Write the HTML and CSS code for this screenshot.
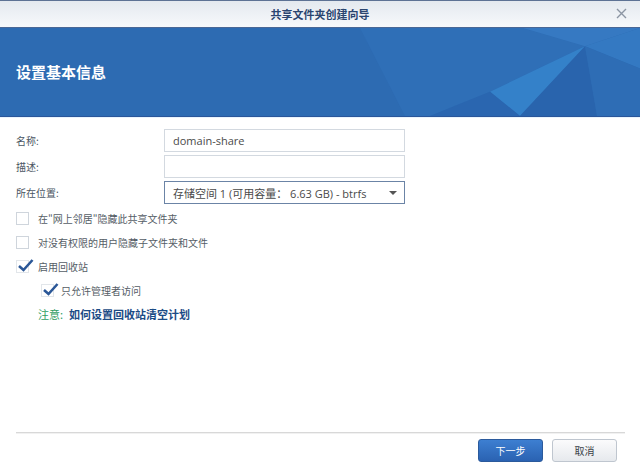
FILE: index.html
```html
<!DOCTYPE html>
<html lang="zh-CN">
<head>
<meta charset="utf-8">
<title>共享文件夹创建向导</title>
<link rel="stylesheet" href="styles.css">
</head>
<body>
<div class="dialog">
  <div class="titlebar">
    <span></span>
    <span class="title">共享文件夹创建向导</span>
    <span class="close"><svg width="11" height="11" viewBox="0 0 11 11"><path d="M1 1L10 10M10 1L1 10" stroke="#8c95a3" stroke-width="1.4" fill="none"/></svg></span>
  </div>
  <div class="banner">
    <svg class="banner-bg" viewBox="0 0 640 87" preserveAspectRatio="none">
      <rect width="640" height="87" fill="#2d6bb2"/>
      <polygon points="360,0 523,0 585,18 490,63 430,87 405,87" fill="#2f6fb7"/>
      <polygon points="523,0 640,0 585,18" fill="#3679c2"/>
      <polygon points="585,18 640,0 640,40" fill="#3479c2"/>
      <polygon points="585,18 490,63 520,87" fill="#3481c9"/>
      <polygon points="585,18 520,87 597,87" fill="#2964ad"/>
      <polygon points="585,18 597,87 640,87 640,40" fill="#2e6db5"/>
      <polygon points="490,63 430,87 520,87" fill="#2a66b0"/>
    </svg>
    <h1 class="banner-title">设置基本信息</h1>
  </div>
  <div class="content">
    <div class="fields">
      <label class="label">名称:</label>
      <div class="input">domain-share</div>
      <label class="label">描述:</label>
      <div class="input"></div>
      <label class="label">所在位置:</label>
      <div class="input select"><span>存储空间 1 (可用容量： 6.63 GB) - btrfs</span><span class="arrow"></span></div>
    </div>
    <div class="options">
      <div class="opt"><span class="cb"></span><span>在"网上邻居"隐藏此共享文件夹</span></div>
      <div class="opt"><span class="cb"></span><span>对没有权限的用户隐藏子文件夹和文件</span></div>
      <div class="opt"><span class="cb checked"><svg width="17" height="15" viewBox="0 0 17 15"><path d="M2 8L6.5 12L15.5 2" stroke="#2b5797" stroke-width="2.6" fill="none"/></svg></span><span>启用回收站</span></div>
      <div class="opt sub"><span class="cb checked"><svg width="17" height="15" viewBox="0 0 17 15"><path d="M2 8L6.5 12L15.5 2" stroke="#2b5797" stroke-width="2.6" fill="none"/></svg></span><span>只允许管理者访问</span></div>
      <div class="opt note"><span class="note-label">注意:</span><span class="note-link">如何设置回收站清空计划</span></div>
    </div>
  </div>
  <div class="footer">
    <button class="btn primary">下一步</button>
    <button class="btn">取消</button>
  </div>
</div>
</body>
</html>
```
FILE: styles.css
```css
* { box-sizing: border-box; }
html, body { margin: 0; padding: 0; background: #fff; }
body { font-family: "Open Sans", "Noto Sans CJK SC", sans-serif; color: #4b5663; }
.dialog { width: 640px; height: 466px; display: flex; flex-direction: column; overflow: hidden; }
.titlebar {
  height: 28px;
  border-top: 1px solid #5d7294;
  border-bottom: 1px solid #4a6896;
  background: linear-gradient(#e4e9ef, #f7f9fb);
  display: grid;
  grid-template-columns: 1fr auto 1fr;
  align-items: center;
}
.title { font-family: "Noto Sans CJK SC", sans-serif; font-size: 11px; font-weight: 700; color: #2a4570; padding-bottom: 1px; }
.close { justify-self: end; padding-right: 13px; display: flex; padding-bottom: 2px; }
.banner {
  height: 89px;
  display: grid;
  border-bottom: 1px solid #2a569a;
  box-shadow: 0 1px 0 #e8f3fc;
}
.banner-bg { grid-area: 1 / 1; width: 640px; height: 88px; display: block; }
.banner-title {
  grid-area: 1 / 1;
  align-self: center;
  margin: 0 0 0 16px;
  font-family: "Noto Sans CJK SC", sans-serif;
  font-size: 15px;
  font-weight: 700;
  color: #fff;
  padding-bottom: 1px;
}
.content { flex: 1; padding: 12px 0 0 16px; }
.fields { display: grid; grid-template-columns: 148px 241px; row-gap: 3px; align-items: center; }
.label { font-family: "Noto Sans CJK SC", sans-serif; font-size: 10px; color: #4b5663; }
.input {
  height: 23px;
  border: 1px solid #d3d9e0;
  background: #fff;
  font-size: 11px;
  color: #4a4a4a;
  padding: 0 8px;
  display: flex;
  align-items: center;
}
.select { border-color: #6b84a6; justify-content: space-between; padding-right: 7px; }
.arrow { width: 0; height: 0; border-left: 4px solid transparent; border-right: 4px solid transparent; border-top: 4px solid #555; }
.options { display: flex; flex-direction: column; padding-top: 2px; }
.opt { height: 24px; display: flex; align-items: center; font-family: "Noto Sans CJK SC", sans-serif; font-size: 10px; color: #555d66; }
.cb { width: 13px; height: 13px; border: 1px solid #cfd5dc; background: #fff; margin-right: 9px; flex: none; display: flex; }
.cb.checked { border-color: #e2e6ea; }
.cb svg { margin: -3px 0 0 0; flex: none; }
.sub { padding-left: 25px; }
.sub .cb { margin-right: 7px; }
.note { padding-left: 22px; font-size: 11px; }
.note-label { color: #2f9d63; margin-right: 6px; }
.note-link { color: #1b4b85; font-weight: 700; }
.footer {
  margin: 0 15px 4px 16px;
  border-top: 1px solid #d8d8d8;
  box-shadow: inset 0 1px 0 #f1f1f1;
  padding-top: 6px;
  display: flex;
  justify-content: flex-end;
  gap: 9px;
  padding-right: 8px;
}
.btn {
  width: 65px;
  height: 23px;
  border: 1px solid #bfc6cf;
  border-radius: 3px;
  background: linear-gradient(#fbfbfc, #e6e9ed);
  font-family: "Noto Sans CJK SC", sans-serif;
  font-size: 10px;
  color: #3a3f46;
  padding: 0;
}
.btn.primary { border-color: #2b5a9c; background: linear-gradient(#3d7fd1, #2a62b2); color: #fff; }
```
